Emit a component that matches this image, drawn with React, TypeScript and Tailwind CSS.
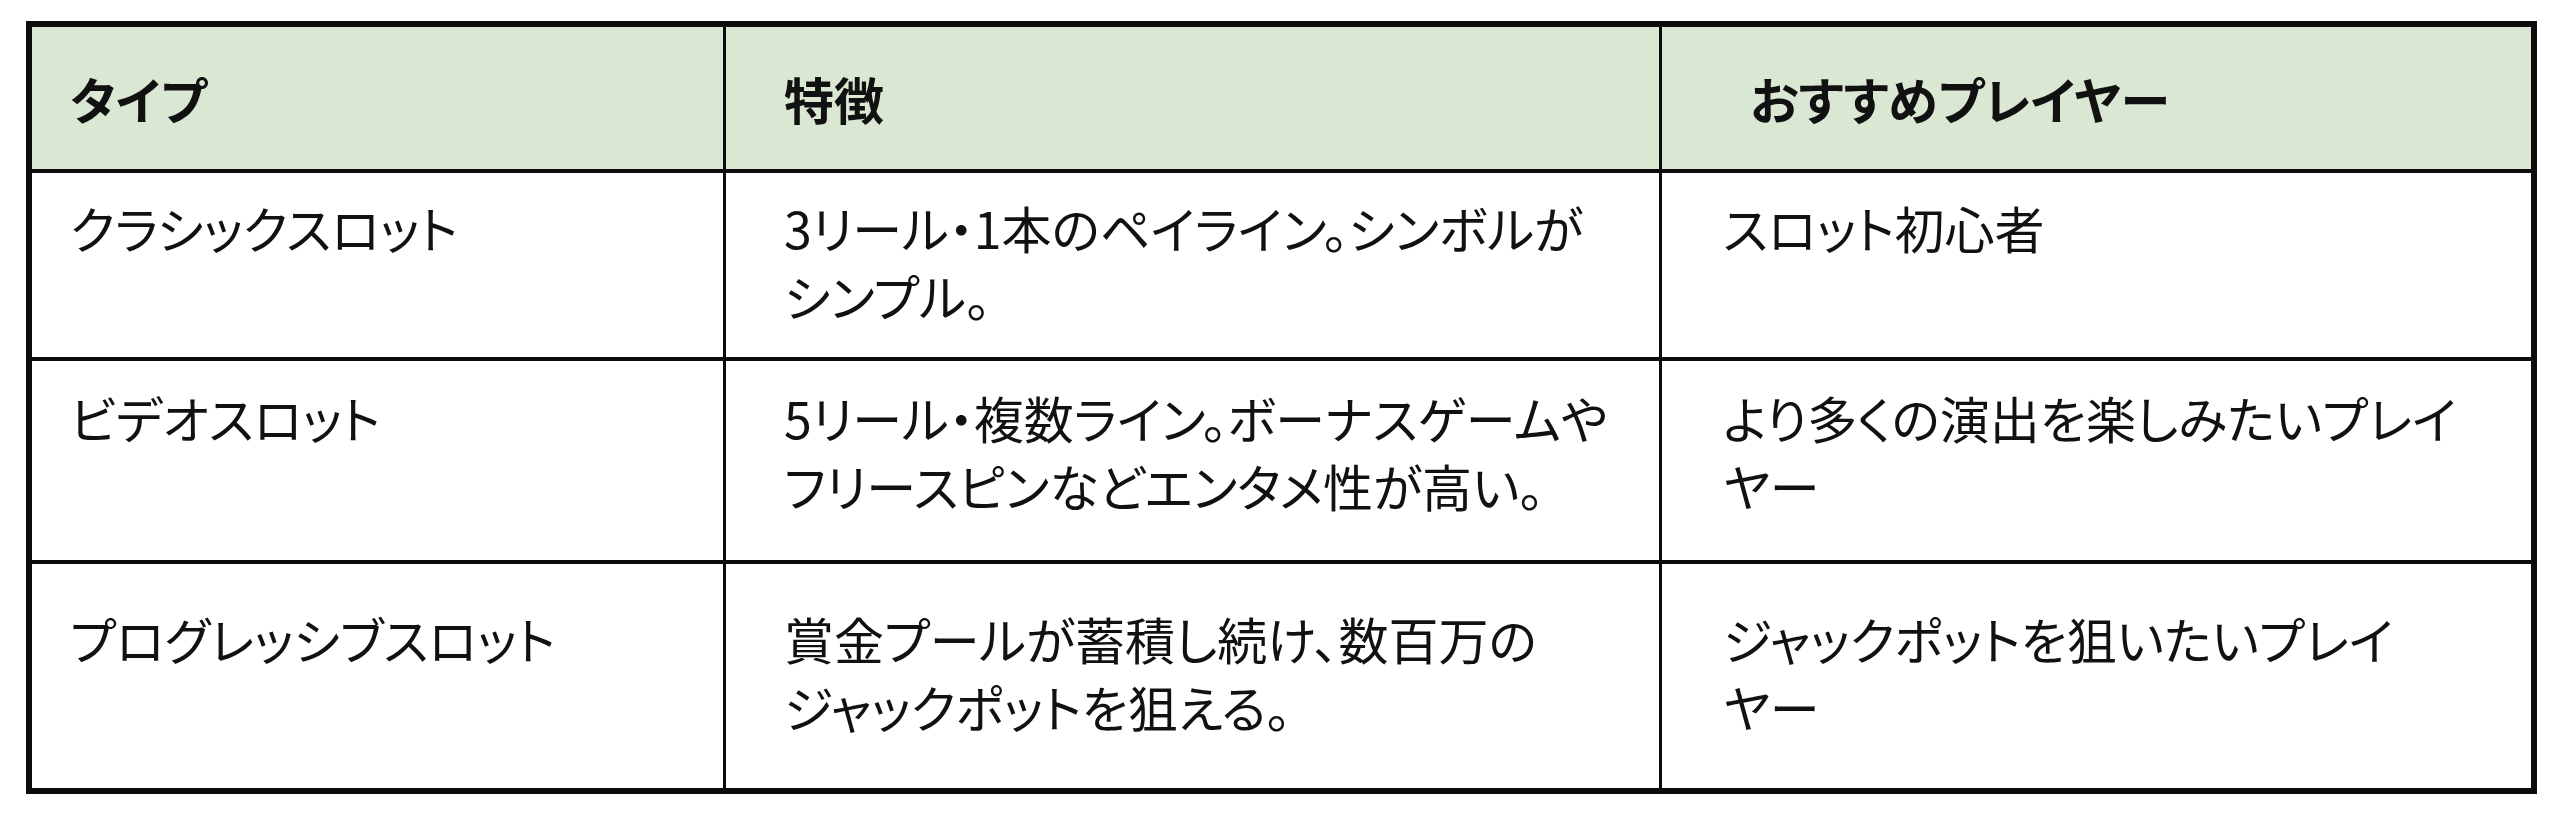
const ROWS = [
  {
    type: "クラシックスロット",
    feature: ["3リール・1本のペイライン。シンボルが", "シンプル。"],
    player: ["スロット初心者"],
    pad: "pt-[20px]",
  },
  {
    type: "ビデオスロット",
    feature: ["5リール・複数ライン。ボーナスゲームや", "フリースピンなどエンタメ性が高い。"],
    player: ["より多くの演出を楽しみたいプレイ", "ヤー"],
    pad: "pt-[22px]",
  },
  {
    type: "プログレッシブスロット",
    feature: ["賞金プールが蓄積し続け、数百万の", "ジャックポットを狙える。"],
    player: ["ジャックポットを狙いたいプレイ", "ヤー"],
    pad: "pt-[40px]",
  },
];

const Lines = ({ lines }: { lines: string[] }) => (
  <>
    {lines.map((l, i) => (
      <div key={i} className="whitespace-nowrap">
        {l}
      </div>
    ))}
  </>
);

/* ============ SLOT TYPES TABLE ============ */
const App = () => (
  <div className="min-h-screen bg-white pl-[26px] pt-[21px] font-['Noto_Sans_CJK_JP','Noto_Sans_CJK_SC',sans-serif] text-[50px] leading-[68px] text-[#111] [font-feature-settings:'palt']">
    <div className="grid w-[2511px] grid-cols-[691px_933px_869px] grid-rows-[142px_184px_199px_224px] gap-x-[3px] gap-y-[4px] border-[6px] border-[#0d0b0b] bg-[#0d0b0b]">
      {/* Header */}
      <div className="flex items-center bg-[#d9e7d3] pl-[38px] font-bold">タイプ</div>
      <div className="flex items-center bg-[#d9e7d3] pl-[58px] font-bold">特徴</div>
      <div className="flex items-center bg-[#d9e7d3] pl-[88px] font-bold">おすすめプレイヤー</div>

      {/* Rows */}
      {ROWS.map((r) => (
        <>
          <div key={r.type + "-a"} className={`bg-white pl-[38px] ${r.pad}`}>
            {r.type}
          </div>
          <div key={r.type + "-b"} className={`bg-white pl-[58px] ${r.pad}`}>
            <Lines lines={r.feature} />
          </div>
          <div key={r.type + "-c"} className={`bg-white pl-[61px] ${r.pad}`}>
            <Lines lines={r.player} />
          </div>
        </>
      ))}
    </div>
  </div>
);

export default App;
